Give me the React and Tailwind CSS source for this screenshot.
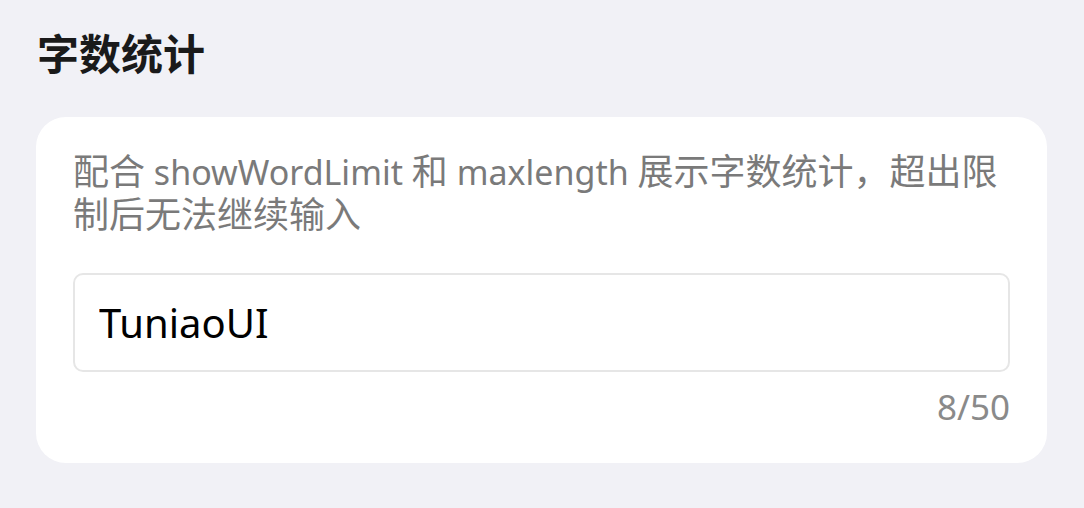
export default function App() {
    return (
        <div
            className="min-h-[508px] w-[1084px] bg-[#f1f1f6] px-[36px] pt-[30px] pb-[44px]"
            style={{ fontFamily: '"Noto Sans", "Noto Sans CJK SC", sans-serif' }}
        >
            {/* 标题 */}
            <h2 className="pl-[1px] text-[42px] leading-[48px] font-bold text-[#1a1a1a]">
                字数统计
            </h2>

            {/* 卡片 */}
            <div className="mt-[39px] w-[1011px] rounded-[30px] bg-white px-[37px] pt-[34px] pb-[36px]">
                <p className="text-[34px] leading-[43px] text-[#7a7a7a]">
                    <span className="text-[36px] leading-none">配合</span> showWordLimit{" "}
                    <span className="text-[36px] leading-none">和</span> maxlength{" "}
                    <span className="text-[36px] leading-none">展示字数统计，超出限</span>
                    <br />
                    <span className="text-[36px] leading-none">制后无法继续输入</span>
                </p>

                <div className="mt-[36px] flex h-[99px] items-center rounded-[10px] border-2 border-[#e6e6e6] px-[24px]">
                    <input
                        type="text"
                        defaultValue="TuniaoUI"
                        maxLength={50}
                        className="w-full bg-transparent text-[40px] leading-[50px] text-black outline-none"
                    />
                </div>

                <div className="mt-[15px] text-right text-[35px] leading-[40px] text-[#8a8a8a]">
                    8/50
                </div>
            </div>
        </div>
    );
}
